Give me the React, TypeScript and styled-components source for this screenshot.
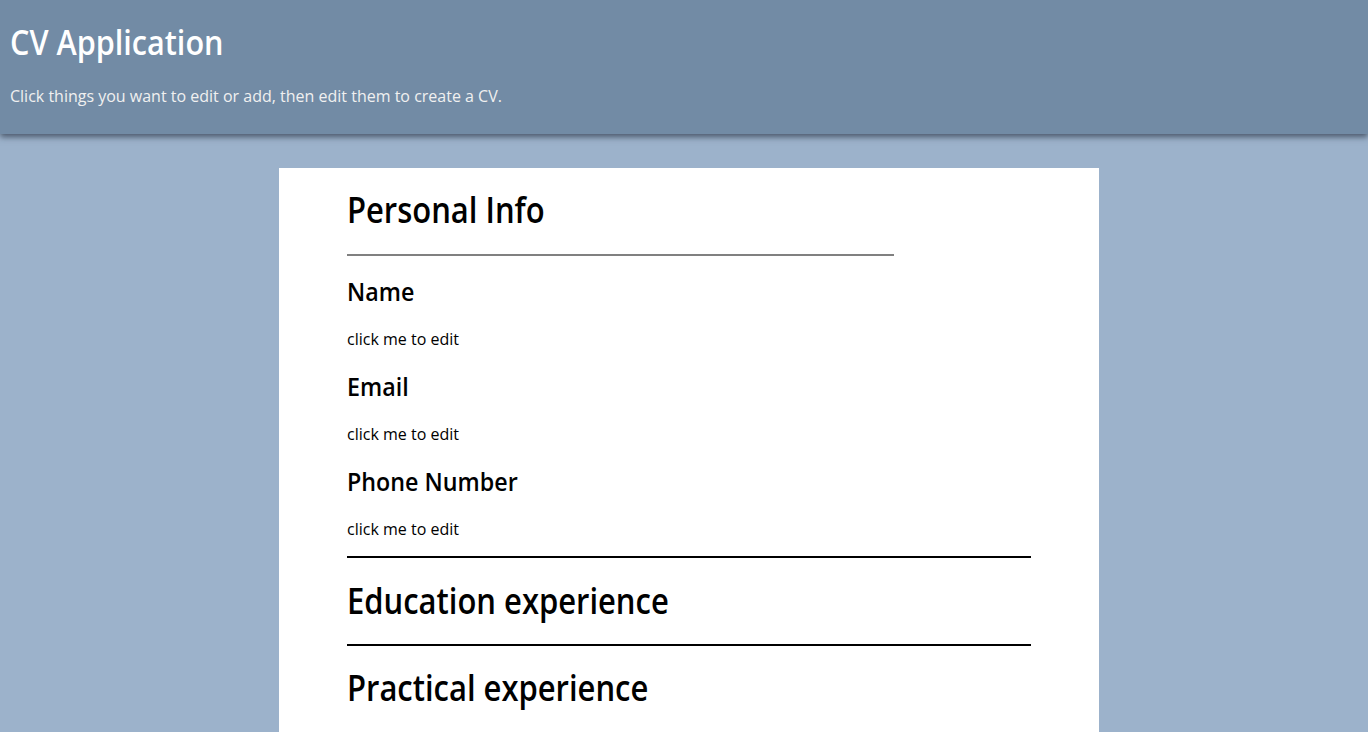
import React from "react";
import styled, { createGlobalStyle } from "styled-components";

const GlobalStyle = createGlobalStyle`
  html, body {
    margin: 0;
    padding: 0;
    background: #9cb2cb;
    font-family: "Open Sans", "Noto Sans", sans-serif;
    color: #000;
  }
  * { box-sizing: border-box; }
`;

const Header = styled.header`
  background: #728ba5;
  height: 134px;
  padding: 19px 10px 0;
  box-shadow: 0 3px 6px rgba(40, 50, 65, 0.7);
  position: relative;
  z-index: 1;
`;

/* semi-condensed look of the reference headings */
const Narrow = styled.span<{ $x: number }>`
  display: inline-block;
  transform: scaleX(${(p) => p.$x});
  transform-origin: left center;
  white-space: nowrap;
`;

const Title = styled.h1`
  margin: 0;
  font-size: 34px;
  font-weight: 600;
  color: #fff;
  line-height: 46px;
`;

const Subtitle = styled.p`
  margin: 20px 0 0;
  font-size: 16px;
  line-height: 22px;
  color: #f0f0f0;
`;

const Main = styled.main`
  padding: 34px 0 0 279px;
`;

const Card = styled.div`
  width: 820px;
  background: #fff;
  padding: 17px 68px 40px;
  display: flex;
  flex-direction: column;
`;

const SectionTitle = styled.h2<{ $top?: number }>`
  margin: ${(p) => p.$top ?? 0}px 0 0;
  font-size: 36px;
  font-weight: 600;
  line-height: 49px;
`;

const Rule = styled.hr<{ $short?: boolean; $top: number }>`
  margin: ${(p) => p.$top}px 0 0;
  border: none;
  height: 2px;
  width: ${(p) => (p.$short ? "80%" : "100%")};
  background: ${(p) => (p.$short ? "#808080" : "#000")};
`;

const Field = styled.div`
  display: flex;
  flex-direction: column;
  margin-top: 18px;
  & + & {
    margin-top: 19px;
  }
`;

const Label = styled.h3`
  margin: 0;
  font-size: 26px;
  font-weight: 600;
  line-height: 35px;
`;

const Value = styled.p`
  margin: 19px 0 0;
  font-size: 16px;
  line-height: 22px;
  cursor: pointer;
`;

const fields = ["Name", "Email", "Phone Number"];

export default function App() {
  return (
    <>
      <GlobalStyle />
      <Header>
        <Title>
          <Narrow $x={0.9}>CV Application</Narrow>
        </Title>
        <Subtitle>Click things you want to edit or add, then edit them to create a CV.</Subtitle>
      </Header>
      <Main>
        <Card>
          <SectionTitle>
            <Narrow $x={0.86}>Personal Info</Narrow>
          </SectionTitle>
          <Rule $short $top={20} />
          {fields.map((f) => (
            <Field key={f}>
              <Label>
                <Narrow $x={0.895}>{f}</Narrow>
              </Label>
              <Value>click me to edit</Value>
            </Field>
          ))}
          <Rule $top={16} />
          <SectionTitle $top={18}>
            <Narrow $x={0.86}>Education experience</Narrow>
          </SectionTitle>
          <Rule $top={19} />
          <SectionTitle $top={16.5}>
            <Narrow $x={0.86}>Practical experience</Narrow>
          </SectionTitle>
        </Card>
      </Main>
    </>
  );
}
